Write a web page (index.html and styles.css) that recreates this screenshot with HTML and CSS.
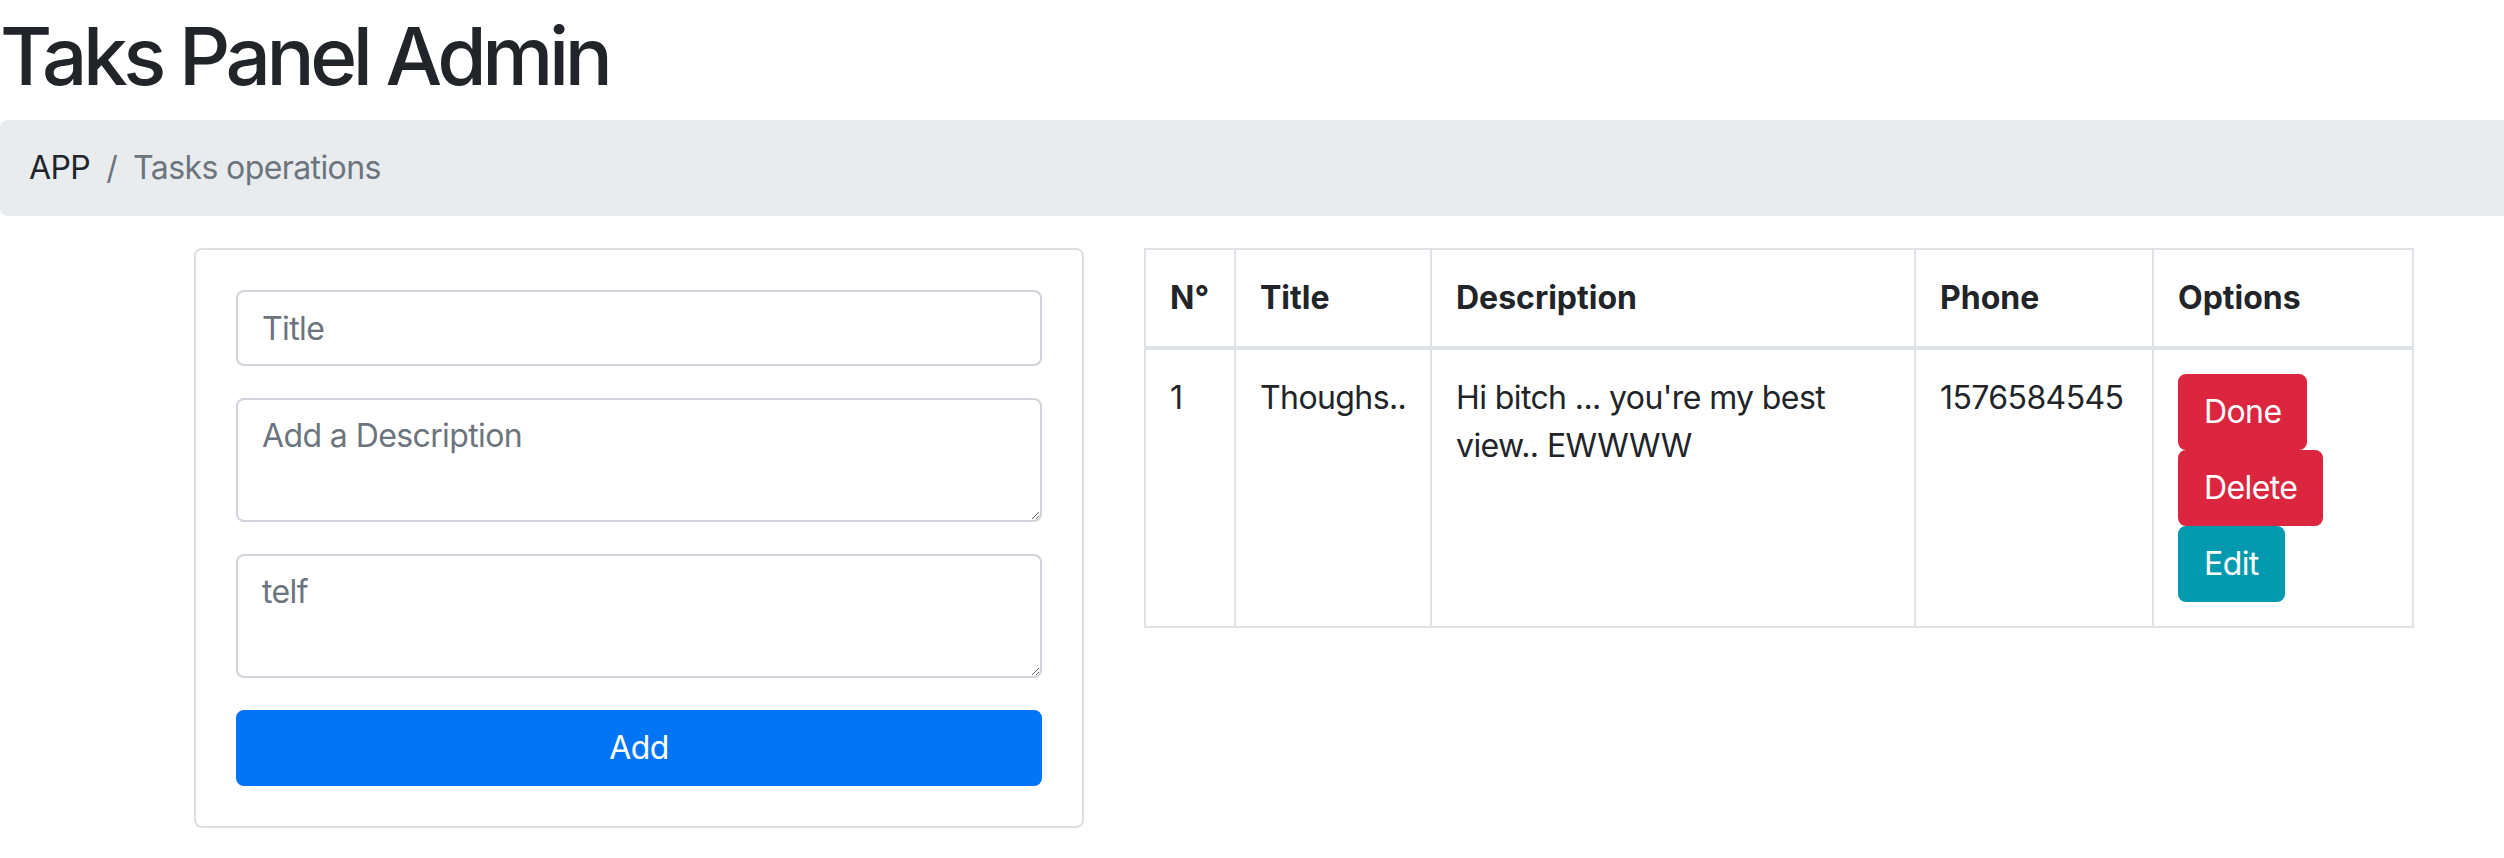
FILE: index.html
```html
<!DOCTYPE html>
<html lang="en">
<head>
<meta charset="utf-8">
<title>Taks Panel Admin</title>
<link rel="stylesheet" href="styles.css">
</head>
<body>
  <h1 class="page-title">Taks Panel Admin</h1>
  <nav class="breadcrumb">
    <span class="crumb">APP</span>
    <span class="crumb-sep">/</span>
    <span class="crumb crumb-active">Tasks operations</span>
  </nav>
  <main class="main-row">
    <section class="col-form">
      <div class="card">
        <form class="card-body">
          <div class="form-group">
            <input class="form-control" type="text" placeholder="Title">
          </div>
          <div class="form-group">
            <textarea class="form-control form-area" rows="2" placeholder="Add a Description"></textarea>
          </div>
          <div class="form-group">
            <textarea class="form-control form-area" rows="2" placeholder="telf"></textarea>
          </div>
          <button type="button" class="btn btn-primary btn-block">Add</button>
        </form>
      </div>
    </section>
    <section class="col-table">
      <table class="tasks">
        <colgroup>
          <col class="c-num">
          <col class="c-title">
          <col class="c-desc">
          <col class="c-phone">
          <col class="c-opts">
        </colgroup>
        <thead>
          <tr>
            <th>N°</th>
            <th>Title</th>
            <th>Description</th>
            <th>Phone</th>
            <th>Options</th>
          </tr>
        </thead>
        <tbody>
          <tr>
            <td>1</td>
            <td>Thoughs..</td>
            <td>Hi bitch ... you're my best view.. EWWWW</td>
            <td>1576584545</td>
            <td>
              <div class="opts">
                <button type="button" class="btn btn-danger">Done</button>
                <button type="button" class="btn btn-danger">Delete</button>
                <button type="button" class="btn btn-info">Edit</button>
              </div>
            </td>
          </tr>
        </tbody>
      </table>
    </section>
  </main>
</body>
</html>
```

FILE: styles.css
```css
* { box-sizing: border-box; }

html, body {
  margin: 0;
  padding: 0;
  background: #fff;
}

body {
  font-family: Inter, "Noto Sans", "Liberation Sans", sans-serif;
  font-size: 32px;
  line-height: 48px;
  letter-spacing: -0.6px;
  color: #212529;
}

.page-title {
  margin: 0 0 16px 0;
  padding-top: 8px;
  font-size: 80px;
  line-height: 96px;
  font-weight: 500;
  letter-spacing: -4.4px;
  color: #212529;
}

.breadcrumb {
  display: flex;
  align-items: baseline;
  margin: 0 0 32px 0;
  padding: 24px 29px;
  background: #e9ecef;
  border-radius: 8px 0 0 8px;
}

.crumb { color: #212529; }
.crumb-sep {
  color: #6c757d;
  padding: 0 16px;
}
.crumb-active { color: #6c757d; }

.main-row {
  display: flex;
  align-items: flex-start;
  padding-left: 164px;
}

.col-form {
  flex: 0 0 950px;
  padding: 0 30px;
}

.col-table {
  flex: 0 0 1330px;
  padding: 0 30px;
}

.card {
  border: 2px solid #dfdfdf;
  border-radius: 8px;
  background: #fff;
}

.card-body {
  padding: 40px;
  margin: 0;
}

.form-group { margin-bottom: 32px; }

.form-control {
  display: block;
  width: 100%;
  height: 76px;
  padding: 12px 24px;
  font-family: inherit;
  font-size: 32px;
  line-height: 48px;
  letter-spacing: -0.6px;
  color: #495057;
  background: #fff;
  border: 2px solid #ced4da;
  border-radius: 8px;
  outline: none;
  margin: 0;
}

.form-area {
  height: 124px;
  resize: vertical;
}

.form-control::placeholder {
  color: #6c757d;
  opacity: 1;
}

.btn {
  display: inline-block;
  padding: 12px 24px;
  font-family: inherit;
  font-size: 32px;
  line-height: 48px;
  font-weight: 400;
  letter-spacing: -0.6px;
  color: #fff;
  text-align: center;
  border: 2px solid transparent;
  border-radius: 8px;
  cursor: pointer;
  margin: 0;
}

.btn-primary { background: #0275f6; border-color: #0275f6; }
.btn-danger { background: #dc2640; border-color: #dc2640; }
.btn-info { background: #039aaf; border-color: #039aaf; }

.btn-block {
  display: block;
  width: 100%;
}

.tasks {
  width: 100%;
  table-layout: fixed;
  border-collapse: collapse;
  color: #212529;
}

.c-num { width: 90px; }
.c-title { width: 196px; }
.c-desc { width: 484px; }
.c-phone { width: 238px; }
.c-opts { width: 260px; }

.tasks th,
.tasks td {
  padding: 24px;
  border: 2px solid #dee2e6;
  text-align: left;
  vertical-align: top;
}

.tasks th {
  font-weight: 700;
  letter-spacing: 0;
}

.tasks thead th {
  border-bottom: 4px solid #dee2e6;
}

.opts {
  display: flex;
  flex-direction: column;
  align-items: flex-start;
}
```
